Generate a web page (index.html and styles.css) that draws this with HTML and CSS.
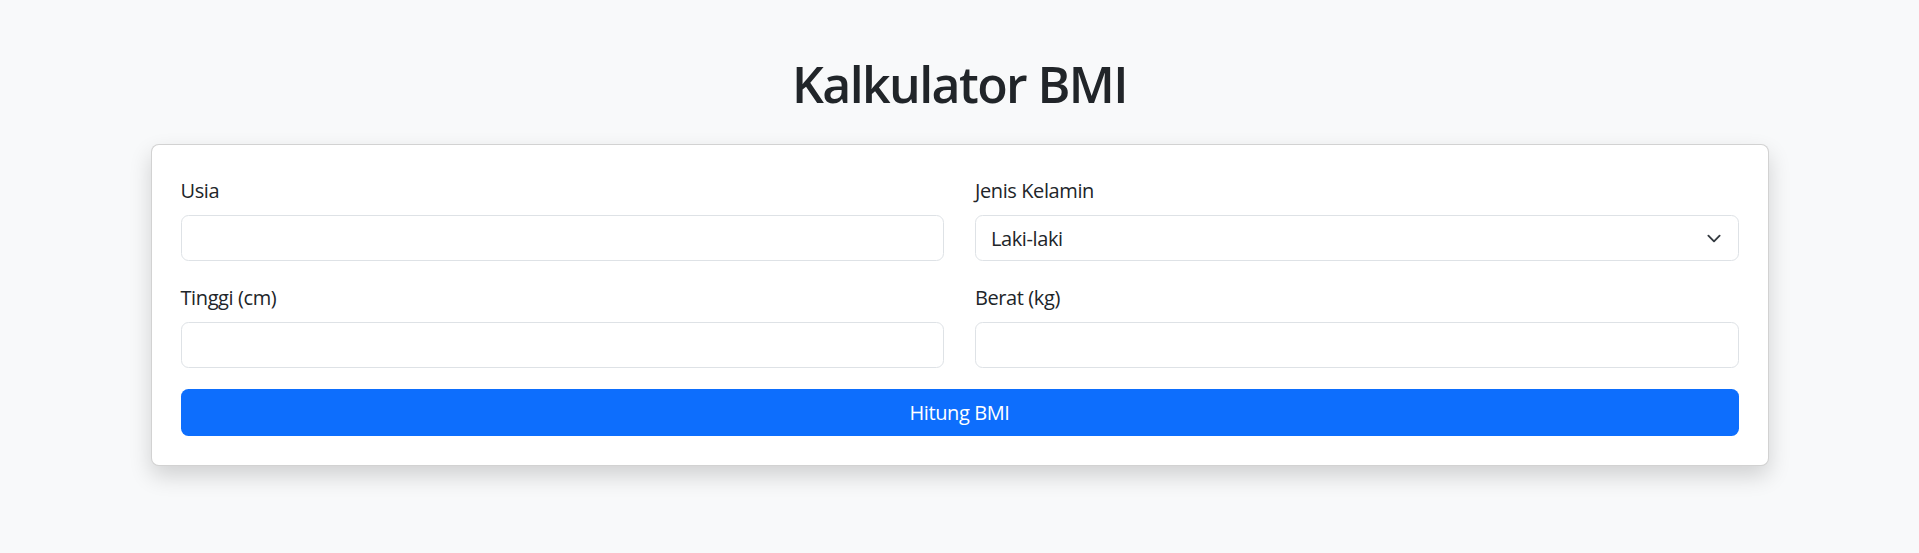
FILE: index.html
```html
<!DOCTYPE html>
<html lang="id">
<head>
<meta charset="utf-8">
<title>Kalkulator BMI</title>
<link rel="stylesheet" href="styles.css">
</head>
<body>
<div class="container">
  <h1 class="title">Kalkulator BMI</h1>
  <div class="card">
    <form class="form">
      <div class="grid">
        <div class="field">
          <label class="label" for="usia">Usia</label>
          <input class="control" id="usia" type="number">
        </div>
        <div class="field">
          <label class="label" for="jk">Jenis Kelamin</label>
          <div class="select-wrap">
            <select class="control select" id="jk">
              <option>Laki-laki</option>
              <option>Perempuan</option>
            </select>
            <svg class="chevron" viewBox="0 0 16 16" width="20" height="15" aria-hidden="true"><path fill="none" stroke="#343a40" stroke-linecap="round" stroke-linejoin="round" stroke-width="2" d="m2 5 6 6 6-6"/></svg>
          </div>
        </div>
        <div class="field">
          <label class="label" for="tinggi">Tinggi (cm)</label>
          <input class="control" id="tinggi" type="number">
        </div>
        <div class="field">
          <label class="label" for="berat">Berat (kg)</label>
          <input class="control" id="berat" type="number">
        </div>
      </div>
      <button class="btn" type="button">Hitung BMI</button>
    </form>
  </div>
</div>
</body>
</html>
```
FILE: styles.css
```css
* { box-sizing: border-box; }
html, body { margin: 0; padding: 0; }
html { background: #f8f9fa; }
body {
  min-height: 553px;
  background: #f8f9fa;
  color: #212529;
  font-family: "Open Sans", "Noto Sans", sans-serif;
}
.container {
  width: 1618px;
  margin: 0 auto;
  padding-top: 54px;
  padding-bottom: 80px;
}
.title {
  margin: 0 0 30px;
  font-size: 50px;
  line-height: 60px;
  font-weight: 600;
  letter-spacing: -1.6px;
  text-align: center;
  color: #212529;
}
.card {
  background: #fff;
  border: 1px solid rgba(0, 0, 0, 0.175);
  border-radius: 8px;
  box-shadow: 0 10px 22px rgba(0, 0, 0, 0.16);
  padding: 30px 29px 29px;
}
.grid {
  display: grid;
  grid-template-columns: 1fr 1fr;
  column-gap: 31px;
  row-gap: 21px;
}
.label {
  display: block;
  font-size: 20px;
  line-height: 31px;
  margin-bottom: 9px;
  letter-spacing: -0.4px;
}
.control {
  display: block;
  width: 100%;
  height: 46px;
  padding: 0 15px;
  font-family: inherit;
  font-size: 20px;
  letter-spacing: -0.4px;
  color: #212529;
  background: #fff;
  border: 1px solid #dee2e6;
  border-radius: 7.5px;
  outline: none;
}
.select-wrap { position: relative; }
.select {
  appearance: none;
  -webkit-appearance: none;
  padding-right: 50px;
}
.chevron {
  position: absolute;
  right: 15px;
  top: 50%;
  margin-top: -7.5px;
  pointer-events: none;
}
.btn {
  display: block;
  width: 100%;
  height: 47px;
  margin-top: 21px;
  border: none;
  border-radius: 7.5px;
  background: #0d6efd;
  color: #fff;
  font-family: inherit;
  font-size: 20px;
  letter-spacing: -0.4px;
  cursor: pointer;
}
```
